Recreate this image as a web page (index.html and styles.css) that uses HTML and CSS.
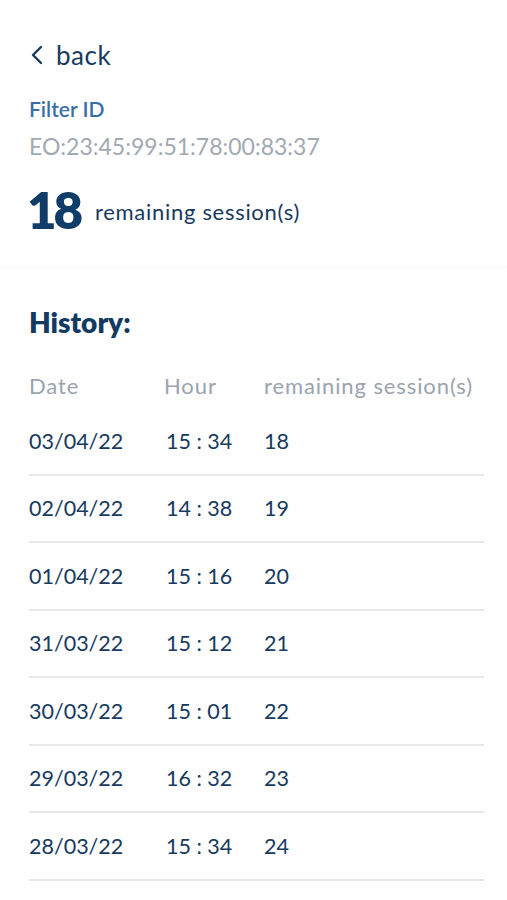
FILE: index.html
```html
<!DOCTYPE html>
<html lang="en">
<head>
<meta charset="utf-8">
<title>Filter history</title>
<link rel="stylesheet" href="styles.css">
</head>
<body>
<header class="top">
  <a class="back" href="#">
    <svg class="chev" width="14" height="20" viewBox="0 0 14 20"><path d="M11 2 L3 10 L11 18" fill="none" stroke="#173a5e" stroke-width="2.4" stroke-linecap="round" stroke-linejoin="round"/></svg>
    <span>back</span>
  </a>
  <div class="label">Filter ID</div>
  <div class="fid">EO:23:45:99:51:78:00:83:37</div>
  <div class="remain"><span class="num">18</span><span class="rtxt">remaining session(s)</span></div>
</header>
<main class="hist">
  <h2 class="title">History:</h2>
  <div class="row head"><span class="c1">Date</span><span class="c2">Hour</span><span class="c3">remaining session(s)</span></div>
  <div class="row"><span class="c1">03/04/22</span><span class="c2">15 : 34</span><span class="c3">18</span></div>
  <div class="row"><span class="c1">02/04/22</span><span class="c2">14 : 38</span><span class="c3">19</span></div>
  <div class="row"><span class="c1">01/04/22</span><span class="c2">15 : 16</span><span class="c3">20</span></div>
  <div class="row"><span class="c1">31/03/22</span><span class="c2">15 : 12</span><span class="c3">21</span></div>
  <div class="row"><span class="c1">30/03/22</span><span class="c2">15 : 01</span><span class="c3">22</span></div>
  <div class="row"><span class="c1">29/03/22</span><span class="c2">16 : 32</span><span class="c3">23</span></div>
  <div class="row"><span class="c1">28/03/22</span><span class="c2">15 : 34</span><span class="c3">24</span></div>
</main>
</body>
</html>
```
FILE: styles.css
```css
* { box-sizing: border-box; margin: 0; padding: 0; }
html, body { background: #fefefe; }
body { font-family: Lato, "Noto Sans", sans-serif; color: #173a5e; width: 507px; }
.top {
  background: #ffffff;
  padding: 38px 29px 0 29px;
  height: 265px;
  box-shadow: 0 2px 5px rgba(0,0,0,0.02);
  position: relative;
}
.back { display: flex; align-items: center; gap: 12px; text-decoration: none; color: #173a5e; font-size: 26px; letter-spacing: 0.5px; height: 34px; }
.chev { margin-left: 1px; }
.label { margin-top: 21px; color: #3a6fa8; font-size: 21px; font-weight: 600; line-height: 32px; }
.fid { margin-top: 5px; color: #a2a9b1; font-size: 23px; line-height: 32px; }
.remain { display: flex; align-items: baseline; margin-top: 20px; }
.num { font-size: 51px; font-weight: 800; color: #0f3c68; line-height: 56px; width: 66px; letter-spacing: -3px; margin-left: -2px; }
.rtxt { font-size: 22px; letter-spacing: 0.7px; color: #173a5e; position: relative; top: -9px; margin-left: 2px; }
.hist { padding: 40px 23px 0 29px; }
.title { font-size: 28px; font-weight: 800; color: #133a60; line-height: 34px; }
.row { display: flex; align-items: center; height: 67.5px; border-bottom: 2px solid #e6e8ea; font-size: 21.5px; color: #173a5e; }
.row.head { height: 69px; margin-top: 0; border-bottom: none; color: #9ba4ae; font-size: 22px; letter-spacing: 0.9px; align-items: flex-end; padding-bottom: 9px; }
.c1 { width: 135px; }
.c2 { width: 100px; }
.c3 { flex: 1; }
.row:not(.head) .c2 { padding-left: 2px; }
```
